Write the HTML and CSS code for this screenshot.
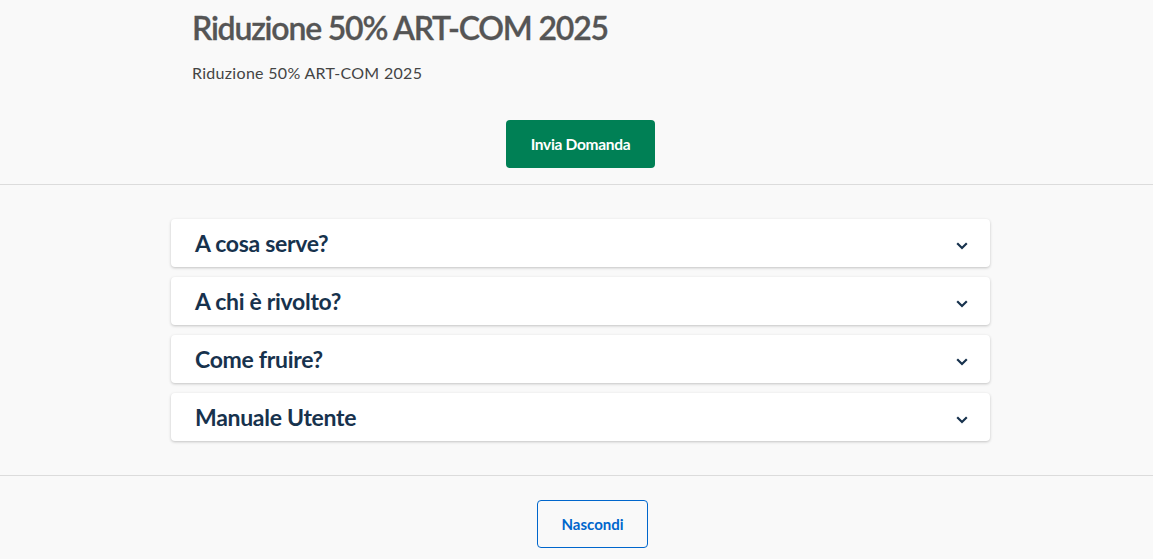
FILE: index.html
```html
<!DOCTYPE html>
<html lang="it">
<head>
<meta charset="utf-8">
<title>Riduzione 50% ART-COM 2025</title>
<link rel="stylesheet" href="styles.css">
</head>
<body>
<section class="intro">
  <div class="wrap">
    <div class="heading">
      <h1 class="title">Riduzione 50% ART-COM 2025</h1>
      <p class="subtitle">Riduzione 50% ART-COM 2025</p>
    </div>
    <div class="actions">
      <button class="btn btn-primary" type="button">Invia Domanda</button>
    </div>
  </div>
</section>
<section class="details">
  <div class="wrap accordion">
    <div class="acc-item"><span class="acc-title">A cosa serve?</span><svg class="chev" width="12" height="8" viewBox="0 0 12 8"><path d="M1.2 1.3 6 6 10.8 1.3" fill="none" stroke="#17324d" stroke-width="2.2"/></svg></div>
    <div class="acc-item"><span class="acc-title">A chi è rivolto?</span><svg class="chev" width="12" height="8" viewBox="0 0 12 8"><path d="M1.2 1.3 6 6 10.8 1.3" fill="none" stroke="#17324d" stroke-width="2.2"/></svg></div>
    <div class="acc-item"><span class="acc-title">Come fruire?</span><svg class="chev" width="12" height="8" viewBox="0 0 12 8"><path d="M1.2 1.3 6 6 10.8 1.3" fill="none" stroke="#17324d" stroke-width="2.2"/></svg></div>
    <div class="acc-item"><span class="acc-title">Manuale Utente</span><svg class="chev" width="12" height="8" viewBox="0 0 12 8"><path d="M1.2 1.3 6 6 10.8 1.3" fill="none" stroke="#17324d" stroke-width="2.2"/></svg></div>
  </div>
</section>
<section class="footer-actions">
  <button class="btn btn-outline" type="button">Nascondi</button>
</section>
</body>
</html>
```
FILE: styles.css
```css
* { box-sizing: border-box; }
html, body { margin: 0; padding: 0; }
body {
  background: #f9f9f9;
  font-family: Lato, "Open Sans", sans-serif;
  color: #444;
  height: 559px;
  overflow: hidden;
}
.wrap {
  width: 819px;
  margin-left: 171px;
}
.intro {
  border-bottom: 1px solid #dcdcdc;
  padding-top: 8px;
  padding-bottom: 16px;
}
.heading { padding-left: 21px; }
.title {
  margin: 0;
  font-size: 32px;
  line-height: 40px;
  font-weight: 600;
  color: #555;
  letter-spacing: -1.2px;
  -webkit-text-stroke: 0.3px #555;
}
.subtitle {
  margin: 14px 0 0;
  font-size: 16px;
  line-height: 22px;
  color: #444;
  letter-spacing: 0.3px;
}
.actions {
  display: flex;
  justify-content: center;
  margin-top: 36px;
}
.btn {
  height: 48px;
  border-radius: 4px;
  font-family: Lato, "Open Sans", sans-serif;
  font-size: 15px;
  font-weight: 700;
  cursor: pointer;
}
.btn-primary {
  width: 149px;
  background: #008055;
  color: #fff;
  border: none;
  font-size: 15.5px;
  letter-spacing: -0.3px;
}
.details {
  padding: 34px 0 34px;
  border-bottom: 1px solid #dcdcdc;
}
.accordion {
  display: flex;
  flex-direction: column;
  gap: 10px;
}
.acc-item {
  height: 48px;
  background: #fff;
  border-radius: 4px;
  box-shadow: 0 1px 3px rgba(0,0,0,0.22);
  display: flex;
  align-items: center;
  justify-content: space-between;
  padding: 0 22px 0 24px;
}
.acc-title {
  font-size: 23px;
  font-weight: 700;
  color: #17324d;
  letter-spacing: -0.3px;
}
.chev { display: block; margin-top: 5px; }
.footer-actions {
  display: flex;
  justify-content: center;
  padding-top: 24px;
  padding-left: 32px;
}
.btn-outline {
  width: 111px;
  background: transparent;
  color: #0066cc;
  border: 1px solid #0066cc;
}
```
